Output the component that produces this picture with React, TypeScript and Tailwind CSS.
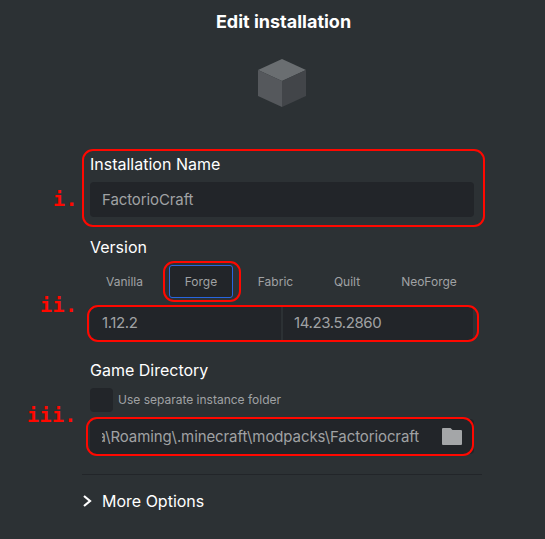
import type { ReactNode } from "react";

const loaders = [
  { name: "Vanilla", width: "w-[69px]" },
  { name: "Forge", width: "w-16", selected: true },
  { name: "Fabric", width: "w-[65px]" },
  { name: "Quilt", width: "w-[58px]" },
  { name: "NeoForge", width: "w-[86px]" },
];

function Callout({ className }: { className: string }) {
  return <div className={`pointer-events-none absolute border-2 border-[#ff0800] ${className}`} />;
}

function Marker({ className, children }: { className: string; children: ReactNode }) {
  return (
    <span
      className={`absolute font-['DejaVu_Sans_Mono',monospace] text-[20px] leading-6 font-bold tracking-[0.4px] text-[#ff0800] ${className}`}
    >
      {children}
    </span>
  );
}

function Cube() {
  return (
    <svg width="48" height="48" viewBox="0 0 48 48" className="block">
      <path d="M24 0 48 11 24 22 0 11Z" fill="#6a6e71" />
      <path d="M0 11 24 22V48L0 37Z" fill="#55585c" />
      <path d="M24 22 48 11V37L24 48Z" fill="#424549" />
    </svg>
  );
}

export default function App() {
  return (
    <main className="relative h-[539px] w-[545px] overflow-hidden bg-[#2c3134] font-['Inter',sans-serif] text-[#a0a2a4]">
      <header className="flex flex-col items-center pt-[10px] pr-0 pl-[22px]">
        <h1 className="text-lg leading-6 font-bold text-white">Edit installation</h1>
        <div className="mt-[25px] mr-[3px]">
          <Cube />
        </div>
      </header>

      <section className="mt-[45px] ml-[90px] w-96">
        <h2 className="text-base leading-6 text-white">Installation Name</h2>
        <div className="mt-[6px] flex h-[35px] items-center rounded bg-[#222529] px-3 pt-[2px] text-[15px] tracking-[-0.1px]">
          FactorioCraft
        </div>
      </section>

      <section className="mt-[18px] ml-[90px] w-96">
        <h2 className="text-base leading-6 text-white">Version</h2>
        <div className="mt-[6px] flex h-[33px] gap-[10px]">
          {loaders.map((loader) => (
            <button
              key={loader.name}
              className={`flex shrink-0 items-center justify-center rounded-[3px] border text-xs ${loader.width} ${
                loader.selected ? "border-[#2865e0] bg-[#222529]" : "border-transparent"
              }`}
            >
              {loader.name}
            </button>
          ))}
        </div>
        <div className="mt-2 flex h-[34px] gap-[2px] text-[15px] tracking-[-0.4px]">
          <div className="flex w-[191px] items-center rounded-l bg-[#222529] px-3">1.12.2</div>
          <div className="flex w-[190px] items-center rounded-r bg-[#222529] px-[11px]">14.23.5.2860</div>
        </div>
      </section>

      <section className="mt-[18px] ml-[90px] w-96">
        <h2 className="text-base leading-6 text-white">Game Directory</h2>
        <div className="mt-[6px] flex h-6 items-center gap-[5px] text-xs">
          <span className="h-6 w-[23px] rounded bg-[#222529]" />
          <span>Use separate instance folder</span>
        </div>
        <div className="mt-[7px] flex h-[35px] items-center rounded bg-[#222529] pr-3 pl-3 text-[15px]">
          <div className="flex w-[317px] justify-end overflow-hidden pt-[2px] tracking-[-0.1px] whitespace-nowrap">
            a\Roaming\.minecraft\modpacks\Factoriocraft
          </div>
          <svg width="20" height="17" viewBox="0 0 20 17" fill="#a4a6a8" className="ml-[23px] shrink-0">
            <path d="M1 0h7.5l2 2H19q1 0 1 1v13q0 1-1 1H1q-1 0-1-1V1q0-1 1-1Z" />
          </svg>
        </div>
      </section>

      <footer className="mt-5 ml-[82px] w-[400px] border-t border-[#222529] pt-[14px]">
        <div className="flex items-center gap-[10px] text-base leading-6 text-white">
          <svg width="10" height="12" viewBox="0 0 10 12" fill="none" stroke="white" strokeWidth="2.2">
            <path d="m2 1 6 5-6 5" />
          </svg>
          <span>More Options</span>
        </div>
      </footer>

      <Callout className="top-[149px] left-[82px] h-[78px] w-[403px] rounded-[11px]" />
      <Callout className="top-[261px] left-[163px] h-[41px] w-[78px] rounded-[11px]" />
      <Callout className="top-[305px] left-[87px] h-[37px] w-[392px] rounded-[11px]" />
      <Callout className="top-[417px] left-[86px] h-[39px] w-[388px] rounded-[11px]" />
      <Marker className="top-[187px] left-[53px]">i.</Marker>
      <Marker className="top-[293px] left-[40px]">ii.</Marker>
      <Marker className="top-[403px] left-[27px]">iii.</Marker>
    </main>
  );
}
